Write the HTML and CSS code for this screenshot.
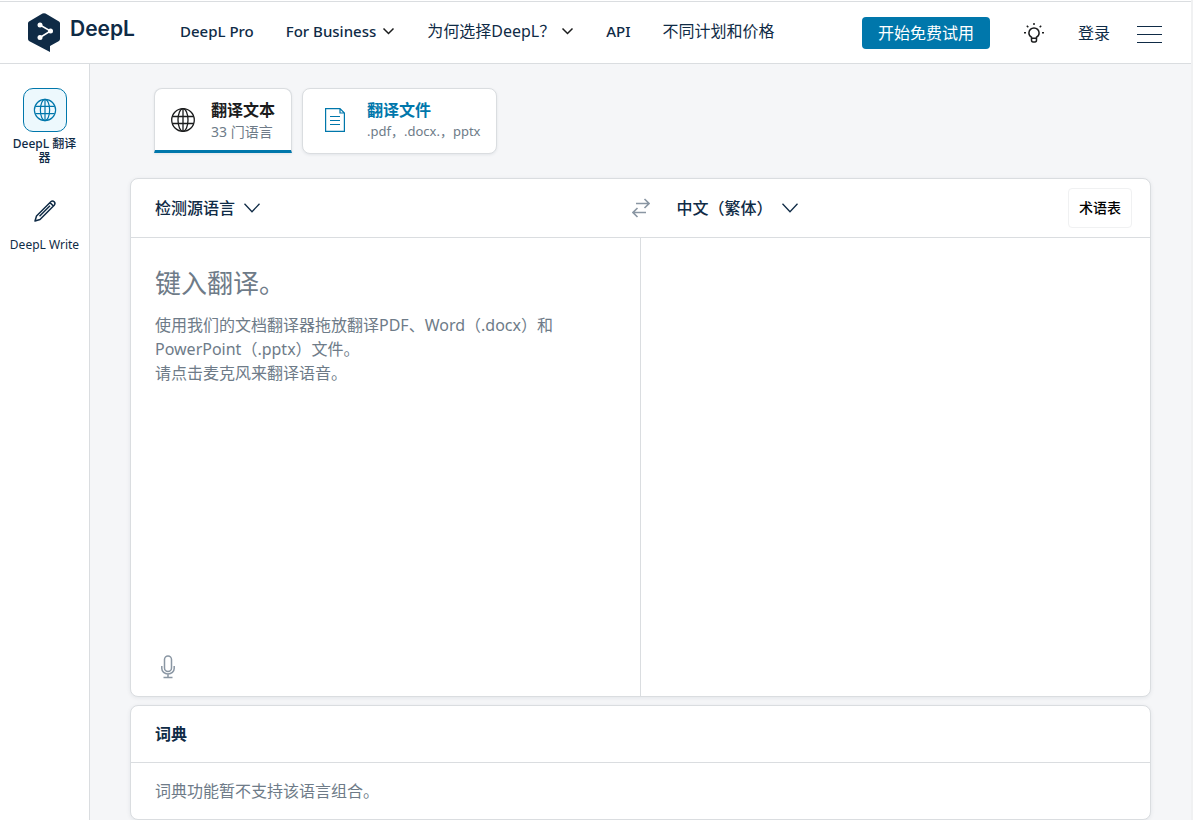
FILE: index.html
```html
<!DOCTYPE html>
<html lang="zh-CN">
  <head>
    <meta charset="UTF-8" />
    <meta name="viewport" content="width=device-width, initial-scale=1.0" />
    <title>DeepL 翻译</title>
    <link rel="stylesheet" href="styles.css">
  </head>

  <body>
    <!-- 頁首 -->
    <header class="header">
      <a class="logo" href="#">
        <svg width="32" height="39" viewBox="0 0 32 39">
          <path fill="#0f2b46" d="M1 8.500 14.500.6Q16 0 17.500.6L31 8.500Q32 9.200 32 10.500V26Q32 27.200 31 28L22 33V39L1 28Q0 27.200 0 26V10.500Q0 9.200 1 8.500Z"/>
          <path fill="none" stroke="#fff" stroke-width="1.500" d="M12 12 22.500 18 12 24.500"/>
          <circle cx="12" cy="12" r="2.500" fill="#fff"/>
          <circle cx="22.500" cy="18" r="2.500" fill="#fff"/>
          <circle cx="12" cy="24.500" r="2.500" fill="#fff"/>
        </svg>
        <span class="logo-text">DeepL</span>
      </a>
      <nav class="nav">
        <a href="#">DeepL Pro</a>
        <button type="button">For Business
          <svg width="13" height="8" viewBox="0 0 13 8"><path d="M1.500 1.500 6.500 6.500 11.500 1.500"/></svg>
        </button>
        <button class="zh" type="button">为何选择DeepL？
          <svg width="13" height="8" viewBox="0 0 13 8"><path d="M1.500 1.500 6.500 6.500 11.500 1.500"/></svg>
        </button>
        <a href="#">API</a>
        <a class="zh" href="#">不同计划和价格</a>
      </nav>
      <div class="account">
        <a class="trial" href="#">开始免费试用</a>
        <button class="icon-btn tips" type="button" aria-label="提示">
          <svg width="20" height="20" viewBox="0 0 20 20" fill="none" stroke="#1b1c1d" stroke-width="1.500">
            <path d="M7.500 14.200C5.800 13.300 4.900 11.700 4.900 10a5.100 5.100 0 0 1 10.200 0c0 1.700-.9 3.300-2.600 4.200V17q0 2-1.500 2H9q-1.500 0-1.500-2ZM7.500 15.300h5"/>
            <path d="M10 0v2M2.800 2.800l1.500 1.500M17.200 2.800l-1.500 1.500M0 9.800h2M18 9.800h2"/>
          </svg>
        </button>
        <a class="login" href="#">登录</a>
        <button class="icon-btn menu" type="button" aria-label="菜单">
          <svg width="25" height="17" viewBox="0 0 25 17" stroke="#0f2b46"><path d="M0 .5h25M0 8.500h25M0 16.500h25"/></svg>
        </button>
      </div>
    </header>

    <div class="page">
      <!-- 左邊的選單 -->
      <aside class="sidebar">
        <a class="product active" href="#">
          <span class="product-icon">
            <svg class="globe" width="24" height="24" viewBox="0 0 26 26">
              <circle cx="13" cy="13" r="11.500"/><ellipse cx="13" cy="13" rx="5" ry="11.500"/><path d="M2.500 9h21M2.500 17h21M13 1.500v23"/>
            </svg>
          </span>
          DeepL 翻译器
        </a>
        <a class="product" href="#">
          <span class="product-icon">
            <svg width="24" height="24" viewBox="0 0 24 24" fill="none" stroke="#0f2b46" stroke-width="1.500" stroke-linejoin="round">
              <path d="M2 22 3.500 17 17.800 2.800Q19.500 1.300 21.200 2.800 22.700 4.500 21.200 6.200L7 20.500ZM17 3.600l3.400 3.400M17 6.800 6.500 17.300"/>
            </svg>
          </span>
          DeepL Write
        </a>
      </aside>

      <main class="main">
        <div class="tabs">
          <button class="tab selected" type="button">
            <svg class="globe" width="24" height="24" viewBox="0 0 24 24">
              <circle cx="12" cy="12" r="11.300"/><ellipse cx="12" cy="12" rx="5" ry="11.300"/><path d="M1.500 8.500h21M1.500 15.500h21M12 .7v22.600"/>
            </svg>
            <span class="tab-text"><b>翻译文本</b><small>33 门语言</small></span>
          </button>
          <button class="tab file" type="button">
            <svg width="20" height="24" viewBox="0 0 20 24" fill="none" stroke="#0077ab" stroke-width="1.200">
              <path d="M.6.600H15L19.400 5v18.400H.6ZM15 .6V5h4.400M5 8.500h10M5 12.500h10M5 16.500h10"/>
            </svg>
            <span class="tab-text"><b>翻译文件</b><small>.pdf，.docx.，pptx</small></span>
          </button>
        </div>

        <!-- 翻譯的區塊 -->
        <section class="card">
          <div class="lang-bar">
            <div class="lang-source">
              <span class="lang">
                <select aria-label="源语言"><option>检测源语言</option></select>
                <svg width="16" height="10" viewBox="0 0 16 10"><path d="M.5.800 8 8.800 15.500.8"/></svg>
              </span>
              <button class="icon-btn" type="button" aria-label="交换语言">
                <svg width="18" height="20" viewBox="0 0 18 20" fill="none" stroke="#8a96a3" stroke-width="1.600">
                  <path d="M4 5.500h13M12.500 1 17 5.500 12.500 10M14 14.500H1M5.500 10 1 14.500 5.500 19"/>
                </svg>
              </button>
            </div>
            <div class="lang-target">
              <span class="lang">
                <select aria-label="目标语言"><option>中文（繁体）</option></select>
                <svg width="16" height="10" viewBox="0 0 16 10"><path d="M.5.800 8 8.800 15.500.8"/></svg>
              </span>
              <button class="glossary" type="button">术语表</button>
            </div>
          </div>
          <div class="panes">
            <div class="source">
              <label for="source_text">
                <span class="hint-title">键入翻译。</span>
                <span class="hint">使用我们的文档翻译器拖放翻译PDF、Word（.docx）和<br>PowerPoint（.pptx）文件。<br>请点击麦克风来翻译语音。</span>
              </label>
              <textarea id="source_text"></textarea>
              <button class="icon-btn mic" type="button" aria-label="语音输入">
                <svg width="14" height="24" viewBox="0 0 14 24" fill="none" stroke="#8a96a3" stroke-width="1.500">
                  <rect x="3.500" y="1" width="7" height="15.500" rx="3.500"/>
                  <path d="M.8 11v2.500a6.200 5.500 0 0 0 12.400 0V11M7 19v3.500M2.500 22.500h9"/>
                </svg>
              </button>
            </div>
            <div class="target"></div>
          </div>
        </section>

        <!-- 詞典 -->
        <section class="card dictionary">
          <h2>词典</h2>
          <p>词典功能暂不支持该语言组合。</p>
        </section>
      </main>
    </div>
  </body>
</html>
```

FILE: styles.css
```css
* {
  margin: 0;
  padding: 0;
  box-sizing: border-box;
}
html {
  background: #f0f1f2;
}
body {
  display: flex;
  flex-direction: column;
  min-height: 100vh;
  margin-right: 2px;
  padding-top: 1px;
  color: #0f2b46;
  background: #fff;
  font-family: "Noto Sans", "Noto Sans CJK SC", sans-serif;
  font-size: 16px;
  line-height: 24px;
}
a {
  color: inherit;
  text-decoration: none;
}
button,
select,
textarea {
  color: inherit;
  font: inherit;
  border: none;
  background: none;
}
svg {
  display: block;
  flex: none;
}

/* 頁首 */
.header {
  display: flex;
  align-items: center;
  height: 63px;
  padding: 0 29px 0 28px;
  border-top: 1px solid #dadde0;
  border-bottom: 1px solid #dadde0;
}
.logo {
  display: flex;
  gap: 10px;
  width: 152px;
}
.logo-text {
  padding-top: 4px;
  font-family: Inter, sans-serif;
  font-size: 21px;
  font-weight: 600;
}
.nav {
  display: flex;
  align-items: center;
  gap: 32px;
  padding-bottom: 3px;
  white-space: nowrap;
  font-size: 15px;
  font-weight: 500;
}
.nav .zh {
  font-size: 16px;
  font-weight: 400;
}
.nav button {
  display: flex;
  align-items: center;
  gap: 6px;
}
.nav svg {
  fill: none;
  stroke: #1b1c1d;
  stroke-width: 1.5;
}
.account {
  display: flex;
  align-items: center;
  margin-left: auto;
}
.trial {
  padding: 4px 16px;
  color: #fff;
  background: #0077ab;
  border-radius: 4px;
}
.tips {
  margin: 0 34px;
}
.login {
  margin-right: 27px;
}
.menu {
  padding-top: 4px;
}

.page {
  display: flex;
  flex: 1;
}

/* 左邊的選單 */
.sidebar {
  width: 90px;
  padding: 24px 8px;
  border-right: 1px solid #dadde0;
}
.product {
  display: flex;
  flex-direction: column;
  align-items: center;
  gap: 5px;
  margin-bottom: 24px;
  font-size: 12px;
  line-height: 14px;
  text-align: center;
}
.product-icon {
  display: flex;
  align-items: center;
  justify-content: center;
  width: 44px;
  height: 44px;
}
.active {
  font-weight: 500;
}
.active .product-icon {
  color: #0077ab;
  background: #edf8fd;
  border: 1px solid #0077ab;
  border-radius: 10px;
}
.globe {
  fill: none;
  stroke: currentColor;
  stroke-width: 1.3;
}

.main {
  flex: 1;
  padding: 24px 40px 0;
  background: #f5f6f8;
}
.tabs {
  display: flex;
  gap: 10px;
  height: 66px;
  margin-left: 24px;
  margin-bottom: 24px;
}
.tab {
  display: flex;
  align-items: flex-start;
  gap: 16px;
  padding: 11px 16px 0 15px;
  text-align: left;
  background: #fff;
  border: 1px solid #dadde0;
  border-radius: 8px;
  box-shadow: 0 1px 3px rgba(15, 43, 70, 0.08);
}
.tab svg {
  margin-top: 8px;
}
.selected {
  height: 65px;
  padding-left: 16px;
  color: #1b1c1d;
  border-bottom: 3px solid #0077ab;
  border-radius: 8px 8px 0 0;
}
.file {
  gap: 22px;
  padding-left: 22px;
  color: #0077ab;
}
.tab-text {
  display: flex;
  flex-direction: column;
  line-height: 21px;
}
.tab-text b {
  font-weight: 700;
}
.tab-text small {
  color: #6e7b88;
  font-size: 14px;
}
.file small {
  font-size: 13px;
}

/* 翻譯的區塊 */
.card {
  background: #fff;
  border: 1px solid #dadde0;
  border-radius: 8px;
  box-shadow: 0 1px 4px rgba(15, 43, 70, 0.08);
}
.lang-bar {
  display: flex;
  height: 59px;
  border-bottom: 1px solid #dadde0;
}
.lang-source,
.lang-target {
  display: flex;
  align-items: center;
  justify-content: space-between;
  width: 50%;
}
.lang-source {
  padding-left: 24px;
}
.lang-target {
  padding-left: 36px;
  padding-right: 18px;
}
.lang-source .icon-btn {
  margin-right: -9px;
}
.lang {
  display: flex;
  align-items: center;
  gap: 8px;
}
.lang select {
  appearance: none;
  font-weight: 500;
}
.lang svg {
  fill: none;
  stroke: #0f2b46;
  stroke-width: 1.3;
}
.glossary {
  height: 40px;
  padding: 0 10px;
  color: #000;
  font-size: 14px;
  font-weight: 500;
  border: 1px solid #f0f1f2;
  border-radius: 4px;
}
.panes {
  display: flex;
  height: 458px;
}
.source,
.target {
  width: 50%;
}
.source {
  position: relative;
  display: flex;
  flex-direction: column;
  justify-content: space-between;
  align-items: flex-start;
  padding: 27px 24px 17px;
  border-right: 1px solid #dadde0;
}
.source label {
  color: #6e7b88;
  white-space: nowrap;
}
.source span {
  display: block;
}
.hint-title {
  margin-bottom: 12px;
  font-size: 26px;
  line-height: 36px;
}
/* 輸入框蓋在提示文字上面 */
.source textarea {
  position: absolute;
  inset: 0;
  width: 100%;
  height: 100%;
  padding: 27px 24px;
  outline: none;
  resize: none;
}
.mic {
  position: relative;
  margin-left: 6px;
}

/* 詞典 */
.dictionary {
  margin-top: 8px;
}
.dictionary h2 {
  padding: 16px 24px;
  font-size: 16px;
  font-weight: 700;
  border-bottom: 1px solid #dadde0;
}
.dictionary p {
  padding: 16px 24px;
  color: #6e7b88;
}
```
